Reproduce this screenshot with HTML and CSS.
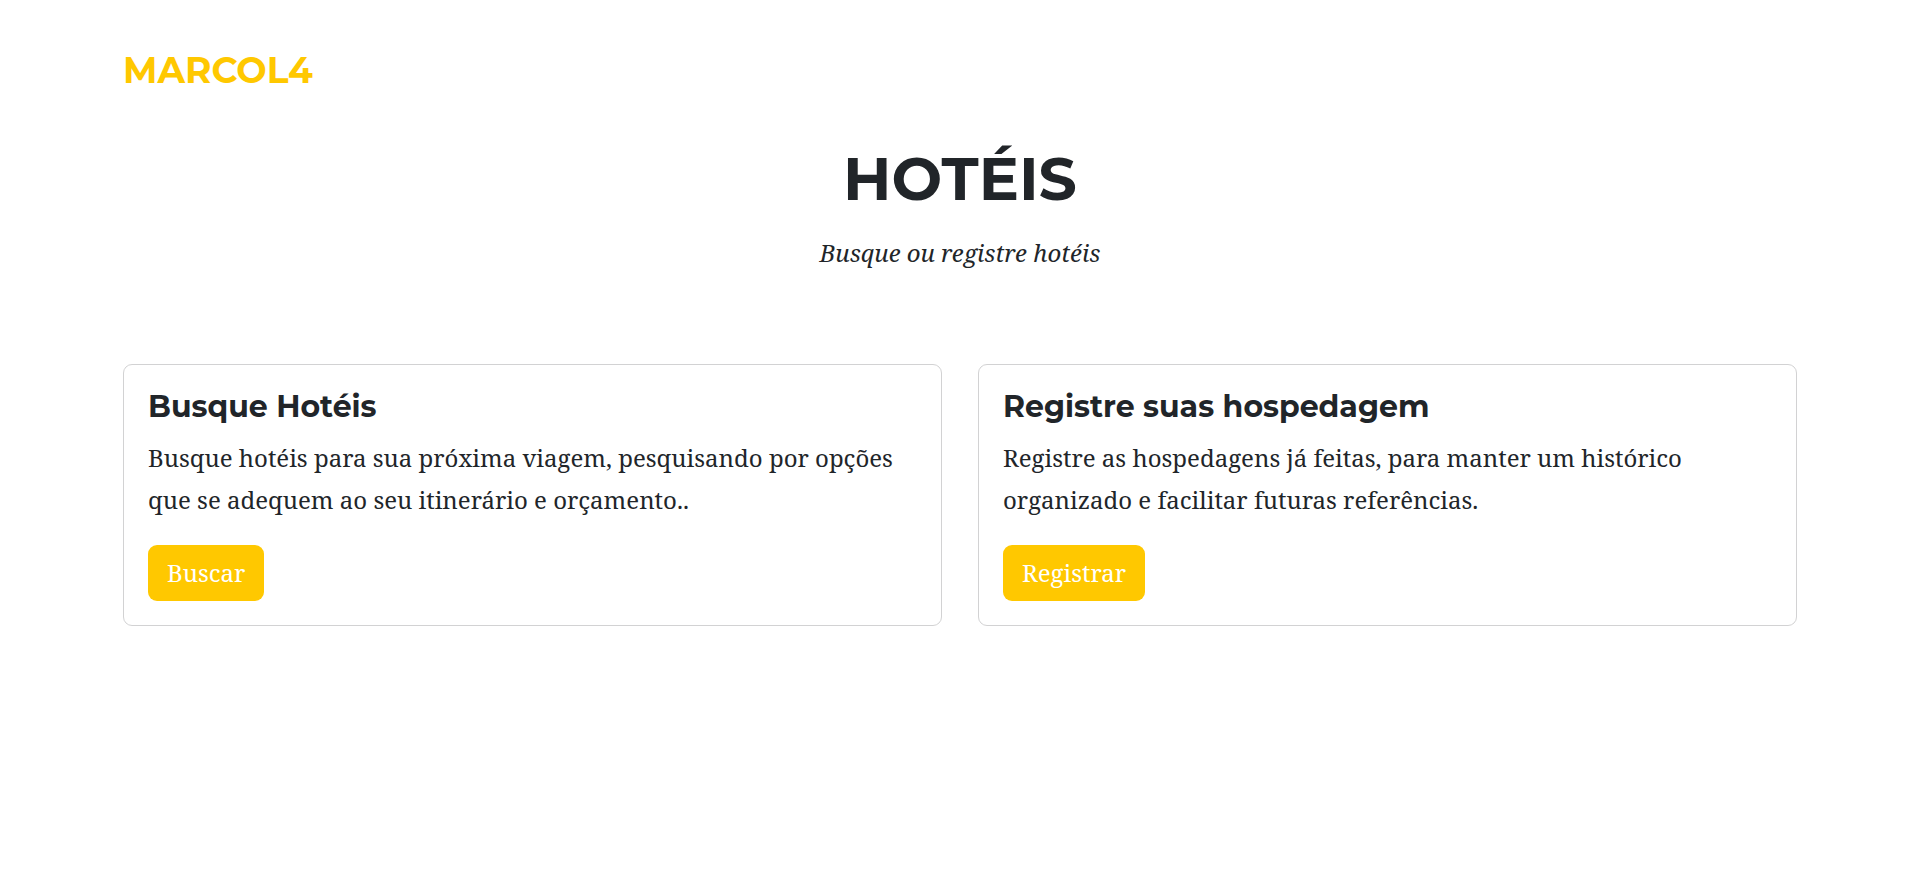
FILE: index.html
```html
<!DOCTYPE html>
<html lang="pt-BR">
<head>
<meta charset="utf-8">
<meta name="viewport" content="width=device-width, initial-scale=1">
<title>Hotéis</title>
<link rel="stylesheet" href="styles.css">
</head>
<body>
<nav class="navbar"><a class="brand" href="#">MARCOL4</a></nav>
<main class="content">
<header class="heading">
<h1 class="title">HOTÉIS</h1>
<p class="subtitle">Busque ou registre hotéis</p>
</header>
<div class="cards">
<section class="card">
<h2 class="card-title">Busque Hotéis</h2>
<p class="card-text">Busque hotéis para sua próxima viagem, pesquisando por opções que se adequem ao seu itinerário e orçamento..</p>
<a class="button" href="#">Buscar</a>
</section>
<section class="card">
<h2 class="card-title">Registre suas hospedagem</h2>
<p class="card-text">Registre as hospedagens já feitas, para manter um histórico organizado e facilitar futuras referências.</p>
<a class="button" href="#">Registrar</a>
</section>
</div>
</main>
</body>
</html>
```
FILE: styles.css
```css
* { box-sizing: border-box; }
body {
  margin: 0;
  padding: 0 122px 0 123px;
  background: #fff;
  color: #212529;
  font: 24px/42px "Roboto Slab", "Noto Serif", "DejaVu Serif", "Liberation Serif", serif;
}
h1, h2, p { margin: 0; }
.navbar { padding-top: 48px; }
.brand, .title, .card-title { font-family: Montserrat, "Open Sans", Inter, sans-serif; font-weight: 700; }
.brand {
  display: inline-block;
  color: #ffc800;
  font-size: 36px;
  line-height: 44px;
  text-decoration: none;
}
.heading { padding: 48px 0 90px; text-align: center; }
.title { font-size: 60px; line-height: 72px; }
.subtitle { padding-top: 17px; font-style: italic; }
.cards { display: grid; grid-template-columns: 1fr 1fr; gap: 36px; }
.card {
  padding: 24px;
  border: 1px solid #d2d2d3;
  border-radius: 9px;
}
.card-title { font-size: 30px; line-height: 36px; margin-bottom: 12px; }
.card-text { margin-bottom: 24px; }
.button {
  display: inline-block;
  padding: 9px 19px;
  border-radius: 9px;
  background: #ffc800;
  color: #fff;
  line-height: 38px;
  text-decoration: none;
}
```
